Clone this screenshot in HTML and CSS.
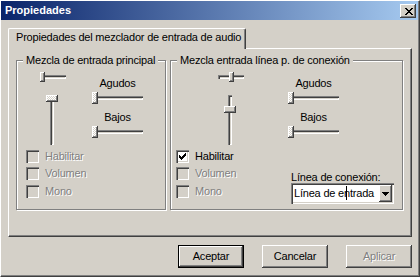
FILE: index.html
```html
<!DOCTYPE html>
<html lang="es">
<head>
<meta charset="UTF-8">
<title>Propiedades</title>
<link rel="stylesheet" href="styles.css">
</head>
<body>
<div class="window">
  <div class="titlebar">
    <span class="title">Propiedades</span>
    <span class="close-btn">
      <svg width="8" height="7" viewBox="0 0 8 7" shape-rendering="crispEdges"><path d="M0 0h2v1H0z M6 0h2v1H6z M1 1h2v1H1z M5 1h2v1H5z M2 2h4v1H2z M3 3h2v1H3z M2 4h4v1H2z M1 5h2v1H1z M5 5h2v1H5z M0 6h2v1H0z M6 6h2v1H6z" fill="#000"/></svg>
    </span>
  </div>

  <div class="content">
    <div class="tabs">
      <div class="tab">Propiedades del mezclador de entrada de audio</div>
    </div>

    <div class="panel">
      <div class="group group-main">
        <span class="legend">Mezcla de entrada principal</span>
        <div class="col-left">
          <div class="sliders">
            <div class="hslider small"><span class="thumb"></span></div>
            <div class="vslider"><span class="thumb dither"></span></div>
          </div>
          <div class="checks">
            <div class="check disabled"><span class="box"></span>Habilitar</div>
            <div class="check disabled"><span class="box"></span>Volumen</div>
            <div class="check disabled"><span class="box"></span>Mono</div>
          </div>
        </div>
        <div class="col-right">
          <div class="tone">
            <div class="slider-label">Agudos</div>
            <div class="hslider"><span class="thumb dither"></span></div>
            <div class="slider-label second">Bajos</div>
            <div class="hslider"><span class="thumb dither"></span></div>
          </div>
        </div>
      </div>

      <div class="group group-line">
        <span class="legend">Mezcla entrada línea p. de conexión</span>
        <div class="col-left">
          <div class="sliders">
            <div class="hslider small"><span class="thumb thumb-mid"></span></div>
            <div class="vslider"><span class="thumb thumb-mid"></span></div>
          </div>
          <div class="checks">
            <div class="check">
              <span class="box">
                <svg width="7" height="7" viewBox="0 0 7 7" shape-rendering="crispEdges"><path d="M6 0h1v1H6z M5 1h2v1H5z M0 2h1v1H0z M4 2h3v1H4z M0 3h2v1H0z M3 3h3v1H3z M0 4h5v1H0z M1 5h3v1H1z M2 6h1v1H2z" fill="#000"/></svg>
              </span>Habilitar
            </div>
            <div class="check disabled"><span class="box"></span>Volumen</div>
            <div class="check disabled"><span class="box"></span>Mono</div>
          </div>
        </div>
        <div class="col-right">
          <div class="tone">
            <div class="slider-label">Agudos</div>
            <div class="hslider"><span class="thumb dither"></span></div>
            <div class="slider-label second">Bajos</div>
            <div class="hslider"><span class="thumb dither"></span></div>
          </div>
          <div class="conn-label">Línea de conexión:</div>
          <div class="combo">
            <span class="combo-text">Línea de entrada</span>
            <span class="ibeam"></span>
            <span class="combo-btn">
              <svg width="7" height="4" viewBox="0 0 7 4" shape-rendering="crispEdges"><path d="M0 0h7v1H0z M1 1h5v1H1z M2 2h3v1H2z M3 3h1v1H3z" fill="#000"/></svg>
            </span>
          </div>
        </div>
      </div>
    </div>

    <div class="buttons">
      <div class="btn default">Aceptar</div>
      <div class="btn">Cancelar</div>
      <div class="btn disabled">Aplicar</div>
    </div>
  </div>
</div>
</body>
</html>
```

FILE: styles.css
```css
body {
  margin: 0;
  font-family: 'Liberation Sans', Arial, sans-serif;
  font-size: 11px;
  letter-spacing: -0.2px;
  line-height: 13px;
  color: #000;
  background-color: #D4D0C8;
}

.window {
  width: 420px;
  height: 277px;
  box-sizing: border-box;
  background-color: #D4D0C8;
  border: 1px solid;
  border-color: #fff #404040 #404040 #fff;
  padding: 0 1px 1px 0;
  box-shadow: inset -1px -1px #808080;
  display: flex;
  flex-direction: column;
  overflow: hidden;
}

/* title bar */
.titlebar {
  height: 19px;
  flex-shrink: 0;
  display: flex;
  justify-content: space-between;
  align-items: flex-start;
  padding-left: 4px;
  background: linear-gradient(to right, #0A246A, #A6CAF0);
}

.title {
  color: #fff;
  font-weight: bold;
  letter-spacing: 0;
  line-height: 19px;
}

.close-btn {
  width: 16px;
  height: 14px;
  margin-top: 3px;
  margin-right: 2px;
  box-sizing: border-box;
  display: flex;
  justify-content: center;
  align-items: center;
  background-color: #D4D0C8;
  box-shadow: inset -1px -1px #404040, inset 1px 1px #fff, inset -2px -2px #808080;
}

.close-btn svg {
  display: block;
  margin-left: 1px;
}

/* tab page */
.content {
  padding: 8px 6px 0 7px;
}

.tabs {
  display: flex;
}

.tab {
  position: relative;
  z-index: 1;
  height: 21px;
  box-sizing: border-box;
  margin-bottom: -1px;
  padding: 2px 4px 0 7px;
  background-color: #D4D0C8;
  border-top: 1px solid #fff;
  border-left: 1px solid #fff;
  border-right: 1px solid #404040;
  border-top-left-radius: 2px;
  border-top-right-radius: 2px;
  box-shadow: inset -1px 0 #808080;
}

.panel {
  height: 189px;
  box-sizing: border-box;
  border: 1px solid;
  border-color: #fff #404040 #404040 #fff;
  box-shadow: inset -1px -1px #808080;
  padding: 11px 0 0 7px;
  display: flex;
  align-items: flex-start;
  gap: 4px;
}

/* group boxes */
.group {
  position: relative;
  display: flex;
  height: 150px;
  box-sizing: border-box;
  border: 1px solid #808080;
  box-shadow: 1px 1px #fff, inset 1px 1px #fff;
}

.group-main {
  width: 150px;
}

.group-line {
  width: 233px;
}

.legend {
  position: absolute;
  top: -7px;
  left: 6px;
  padding: 0 3px;
  background-color: #D4D0C8;
  white-space: nowrap;
}

.col-left {
  display: flex;
  flex-direction: column;
  align-items: flex-start;
  padding-top: 11px;
}

.group-main .col-left {
  width: 66px;
  margin-left: 9px;
}

.group-line .col-left {
  width: 112px;
  margin-left: 5px;
}

.group-main .sliders {
  margin-left: 14px;
}

.group-line .sliders {
  margin-left: 42px;
}

.sliders {
  display: flex;
  flex-direction: column;
  align-items: flex-start;
}

.col-right {
  display: flex;
  flex-direction: column;
  align-items: flex-start;
  padding-top: 16px;
}

.tone {
  width: 51px;
  display: flex;
  flex-direction: column;
  align-items: center;
}

.slider-label {
  white-space: nowrap;
}

.slider-label.second {
  margin-top: 7px;
}

/* trackbars */
.hslider {
  position: relative;
  width: 51px;
  height: 12px;
  margin-top: 2px;
}

.hslider::before,
.vslider::before {
  content: '';
  position: absolute;
  background-color: #D4D0C8;
  box-shadow: inset 1px 1px #808080, inset 2px 2px #404040, inset -1px -1px #fff;
}

.hslider::before {
  left: 0;
  right: 0;
  top: 4px;
  height: 4px;
}

.hslider.small {
  width: 26px;
  height: 10px;
  margin-top: 0;
}

.hslider.small::before {
  top: 3px;
}

.vslider {
  position: relative;
  width: 12px;
  height: 50px;
  margin-top: 13px;
  margin-left: 6px;
}

.vslider::before {
  top: 0;
  bottom: 0;
  left: 4px;
  width: 4px;
}

.thumb {
  position: absolute;
  top: 0;
  left: 0;
  width: 6px;
  height: 12px;
  box-sizing: border-box;
  background-color: #D4D0C8;
  box-shadow: inset -1px -1px #404040, inset 1px 1px #fff, inset -2px -2px #808080;
}

.small .thumb {
  width: 5px;
  height: 10px;
}

.vslider .thumb {
  width: 12px;
  height: 7px;
}

.small .thumb-mid {
  left: 11px;
}

.vslider .thumb-mid {
  top: 11px;
}

.thumb.dither {
  background: repeating-conic-gradient(#fff 0 25%, #D4D0C8 0 50%) 0 0 / 2px 2px;
}

/* checkboxes */
.checks {
  margin-top: 3px;
}

.check {
  display: flex;
  align-items: center;
  height: 17px;
  white-space: nowrap;
}

.check:last-child {
  margin-top: 1px;
}

.box {
  width: 13px;
  height: 13px;
  margin-right: 6px;
  box-sizing: border-box;
  display: flex;
  justify-content: center;
  align-items: center;
  background-color: #fff;
  box-shadow: inset 1px 1px #808080, inset 2px 2px #404040, inset -1px -1px #fff, inset -2px -2px #D4D0C8;
}

.check.disabled {
  color: #808080;
  text-shadow: 1px 1px #fff;
}

.check.disabled .box {
  background-color: #D4D0C8;
}

/* combo box */
.conn-label {
  margin-top: 34px;
  margin-left: 3px;
  line-height: 11px;
  white-space: nowrap;
}

.combo {
  position: relative;
  width: 103px;
  height: 21px;
  margin-left: 3px;
  box-sizing: border-box;
  display: flex;
  align-items: center;
  padding: 2px 2px 2px 3px;
  background-color: #fff;
  box-shadow: inset 1px 1px #808080, inset 2px 2px #404040, inset -1px -1px #fff, inset -2px -2px #D4D0C8;
}

.combo-text {
  white-space: nowrap;
}

.ibeam {
  position: absolute;
  left: 55px;
  top: 3px;
  width: 1px;
  height: 14px;
  background-color: #000;
}

.combo-btn {
  width: 13px;
  height: 17px;
  margin-left: auto;
  box-sizing: border-box;
  display: flex;
  justify-content: center;
  align-items: center;
  background-color: #D4D0C8;
  box-shadow: inset -1px -1px #404040, inset 1px 1px #fff, inset -2px -2px #808080;
}

/* dialog buttons */
.buttons {
  display: flex;
  justify-content: flex-end;
  gap: 18px;
  margin-top: 8px;
}

.btn {
  width: 66px;
  height: 23px;
  box-sizing: border-box;
  display: flex;
  justify-content: center;
  align-items: center;
  background-color: #D4D0C8;
  box-shadow: inset -1px -1px #404040, inset 1px 1px #fff, inset -2px -2px #808080;
}

.btn.default {
  border: 1px solid #000;
}

.btn.disabled {
  color: #808080;
  text-shadow: 1px 1px #fff;
}
```
